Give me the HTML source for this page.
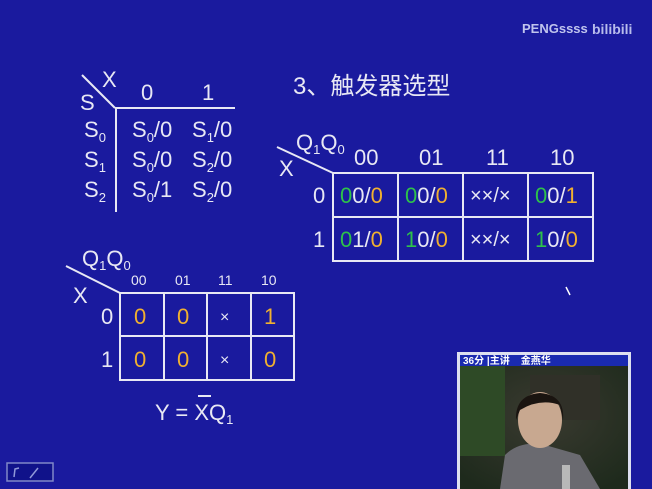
<!DOCTYPE html>
<html><head><meta charset="utf-8"><style>
html,body{margin:0;padding:0;background:#1a1a9e;width:652px;height:489px;overflow:hidden}
svg{display:block}
text{font-family:"Liberation Sans","Noto Sans CJK SC",sans-serif;fill:#e8e8f4}
.g{fill:#2ec24a}.o{fill:#f0b030}
</style></head><body>
<svg width="652" height="489" viewBox="0 0 652 489">
<rect width="652" height="489" fill="#1a1a9e"/>
<text x="522" y="33" font-size="13" font-weight="bold" style="fill:#c0c4ee">PENGssss</text>
<text x="592" y="34" font-size="14" font-weight="bold" style="fill:#b8bcec">bilibili</text>
<g stroke="#e8e8f4" stroke-width="2" fill="none">
<line x1="82" y1="75" x2="115" y2="108"/><line x1="115" y1="108" x2="235" y2="108"/><line x1="116" y1="108" x2="116" y2="212"/>
<line x1="277" y1="147" x2="333" y2="173"/>
<rect x="333" y="173" width="260" height="88"/><line x1="333" y1="217" x2="593" y2="217"/>
<line x1="398" y1="173" x2="398" y2="261"/><line x1="463" y1="173" x2="463" y2="261"/><line x1="528" y1="173" x2="528" y2="261"/>
<line x1="66" y1="266" x2="120" y2="293"/>
<rect x="120" y="293" width="174" height="87"/><line x1="120" y1="336" x2="294" y2="336"/>
<line x1="164" y1="293" x2="164" y2="380"/><line x1="207" y1="293" x2="207" y2="380"/><line x1="251" y1="293" x2="251" y2="380"/>
<line x1="198" y1="396" x2="211" y2="396"/>
</g>
<g font-size="22">
<text x="102" y="87">X</text><text x="80" y="110">S</text>
<text x="141" y="100">0</text><text x="202" y="100">1</text>
<text x="84" y="137">S<tspan font-size="13" dy="5">0</tspan></text>
<text x="84" y="167">S<tspan font-size="13" dy="5">1</tspan></text>
<text x="84" y="197">S<tspan font-size="13" dy="5">2</tspan></text>
<text x="132" y="137">S<tspan font-size="13" dy="5">0</tspan><tspan dy="-5">/0</tspan></text>
<text x="192" y="137">S<tspan font-size="13" dy="5">1</tspan><tspan dy="-5">/0</tspan></text>
<text x="132" y="167">S<tspan font-size="13" dy="5">0</tspan><tspan dy="-5">/0</tspan></text>
<text x="192" y="167">S<tspan font-size="13" dy="5">2</tspan><tspan dy="-5">/0</tspan></text>
<text x="132" y="197">S<tspan font-size="13" dy="5">0</tspan><tspan dy="-5">/1</tspan></text>
<text x="192" y="197">S<tspan font-size="13" dy="5">2</tspan><tspan dy="-5">/0</tspan></text>
<text x="293" y="94" font-size="24">3、触发器选型</text>
<text x="296" y="150">Q<tspan font-size="13" dy="4">1</tspan><tspan dy="-4">Q</tspan><tspan font-size="13" dy="4">0</tspan></text>
<text x="279" y="176">X</text>
<text x="354" y="165">00</text><text x="419" y="165">01</text><text x="486" y="165">11</text><text x="550" y="165">10</text>
<text x="313" y="203">0</text><text x="313" y="247">1</text>
<text x="340" y="203"><tspan class="g">0</tspan>0/<tspan class="o">0</tspan></text>
<text x="405" y="203"><tspan class="g">0</tspan>0/<tspan class="o">0</tspan></text>
<text x="470" y="202" font-size="20">××/×</text>
<text x="535" y="203"><tspan class="g">0</tspan>0/<tspan class="o">1</tspan></text>
<text x="340" y="247"><tspan class="g">0</tspan>1/<tspan class="o">0</tspan></text>
<text x="405" y="247"><tspan class="g">1</tspan>0/<tspan class="o">0</tspan></text>
<text x="470" y="246" font-size="20">××/×</text>
<text x="535" y="247"><tspan class="g">1</tspan>0/<tspan class="o">0</tspan></text>
<text x="82" y="266">Q<tspan font-size="13" dy="4">1</tspan><tspan dy="-4">Q</tspan><tspan font-size="13" dy="4">0</tspan></text>
<text x="73" y="303">X</text>
<text x="101" y="324">0</text><text x="101" y="367">1</text>
<text x="134" y="324" class="o">0</text><text x="177" y="324" class="o">0</text><text x="220" y="322" font-size="16">×</text><text x="264" y="324" class="o">1</text>
<text x="134" y="367" class="o">0</text><text x="177" y="367" class="o">0</text><text x="220" y="365" font-size="16">×</text><text x="264" y="367" class="o">0</text>
<text x="155" y="420">Y = XQ<tspan font-size="13" dy="4">1</tspan></text>
</g>
<g font-size="14"><text x="131" y="285">00</text><text x="175" y="285">01</text><text x="218" y="285">11</text><text x="261" y="285">10</text></g>
<rect x="7" y="463" width="46" height="18" fill="#10128a" stroke="#8088c8" stroke-width="1.5"/>
<path d="M14 477 L15 469 L19 468 M30 478 L38 468" stroke="#9098d8" stroke-width="1.5" fill="none"/>
<line x1="566" y1="287" x2="570" y2="295" stroke="#fff" stroke-width="1.5"/>
<rect x="457" y="352" width="174" height="137" fill="#dde0f0"/>
<rect x="460" y="355" width="168" height="11" fill="#1a2ab0"/>
<text x="463" y="364" font-size="10" font-weight="bold" style="fill:#fff">36分 |主讲&#160;&#160;&#160;&#160;金燕华</text>
<defs><radialGradient id="bg" cx="0.5" cy="0.4" r="0.7"><stop offset="0" stop-color="#3a3a30"/><stop offset="1" stop-color="#1e2a1c"/></radialGradient></defs>
<rect x="460" y="366" width="168" height="123" fill="url(#bg)"/>
<rect x="460" y="366" width="45" height="90" fill="#2e4a26"/>
<rect x="530" y="375" width="70" height="45" fill="#303028"/>
<path d="M500 489 L505 455 Q520 440 545 445 L580 455 L600 489 Z" fill="#6a6a70"/>
<ellipse cx="540" cy="420" rx="22" ry="28" fill="#c8a890"/>
<path d="M516 420 Q515 395 540 393 Q565 395 563 420 L560 405 Q540 398 520 410 Z" fill="#1a1410"/>
<rect x="562" y="465" width="8" height="24" fill="#b8b8b8"/>
</svg>
</body></html>
